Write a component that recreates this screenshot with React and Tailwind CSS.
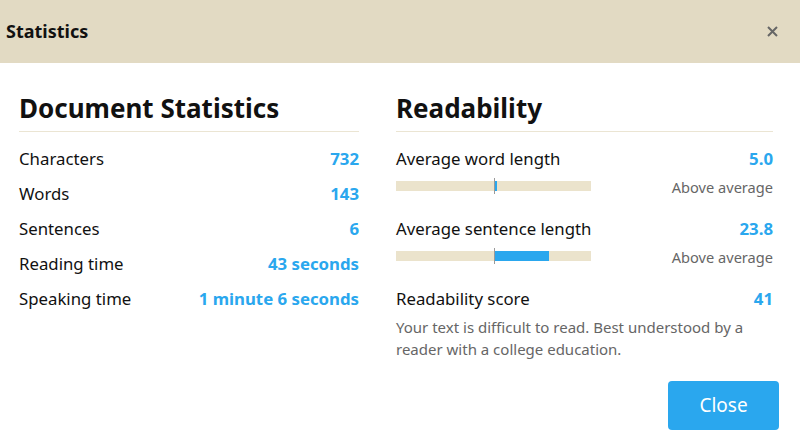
const stats = [
  { label: "Characters", value: "732" },
  { label: "Words", value: "143" },
  { label: "Sentences", value: "6" },
  { label: "Reading time", value: "43 seconds" },
  { label: "Speaking time", value: "1 minute 6 seconds" },
];

const Meter = ({ fill }) => (
  <div className="relative h-[10px] w-[195px] bg-[#ebe3cc]">
    <div className="absolute left-[98px] top-0 h-[10px] bg-[#2aa7ee]" style={{ width: fill }} />
    <div className="absolute left-[98px] top-[-3px] h-[16px] w-px bg-[#9a9a9a]" />
  </div>
);

const Metric = ({ label, value, fill, note }) => (
  <div className="mb-[15px]">
    <div className="flex h-[35px] items-center justify-between">
      <span>{label}</span>
      <span className="font-bold text-[#2aa7ee]">{value}</span>
    </div>
    <div className="flex h-[20px] items-center justify-between">
      <Meter fill={fill} />
      <span className="mt-[3px] text-[14.6px] text-[#666]">{note}</span>
    </div>
  </div>
);

export default function App() {
  return (
    <div className="h-[446px] w-[800px] bg-white text-[16.8px] text-[#111] [font-family:'Noto_Sans',sans-serif]">
      <div className="flex h-[63px] items-center justify-between bg-[#e2dac3] pl-[6px] pr-[22px]">
        <h1 className="text-[18px] font-bold">Statistics</h1>
        <svg width="11" height="11" viewBox="0 0 11 11" className="text-[#666]">
          <path d="M1 1l9 9M10 1l-9 9" stroke="currentColor" strokeWidth="2" />
        </svg>
      </div>

      <div className="flex pl-[19px] pt-[29px]">
        <div className="w-[340px]">
          <h2 className="border-b border-[#ebe5d3] pb-[7px] text-[26px] leading-[32px] font-bold">Document Statistics</h2>
          <div className="mt-[9px]">
            {stats.map((s) => (
              <div key={s.label} className="flex h-[35px] items-center justify-between">
                <span>{s.label}</span>
                <span className="font-bold text-[#2aa7ee]">{s.value}</span>
              </div>
            ))}
          </div>
        </div>

        <div className="ml-[37px] w-[377px]">
          <h2 className="border-b border-[#ebe5d3] pb-[7px] text-[26px] leading-[32px] font-bold">Readability</h2>
          <div className="mt-[9px]">
            <Metric label="Average word length" value="5.0" fill="3px" note="Above average" />
            <Metric label="Average sentence length" value="23.8" fill="55px" note="Above average" />
            <div className="flex h-[35px] items-center justify-between">
              <span>Readability score</span>
              <span className="font-bold text-[#2aa7ee]">41</span>
            </div>
            <p className="text-[15px] leading-[22px] text-[#666]">
              Your text is difficult to read. Best understood by a reader with a college education.
            </p>
          </div>
        </div>
      </div>

      <div className="mt-[21px] flex justify-end pr-[21px]">
        <button className="h-[49px] w-[111px] rounded-sm bg-[#2aa7ee] text-[19px] text-white">Close</button>
      </div>
    </div>
  );
}
